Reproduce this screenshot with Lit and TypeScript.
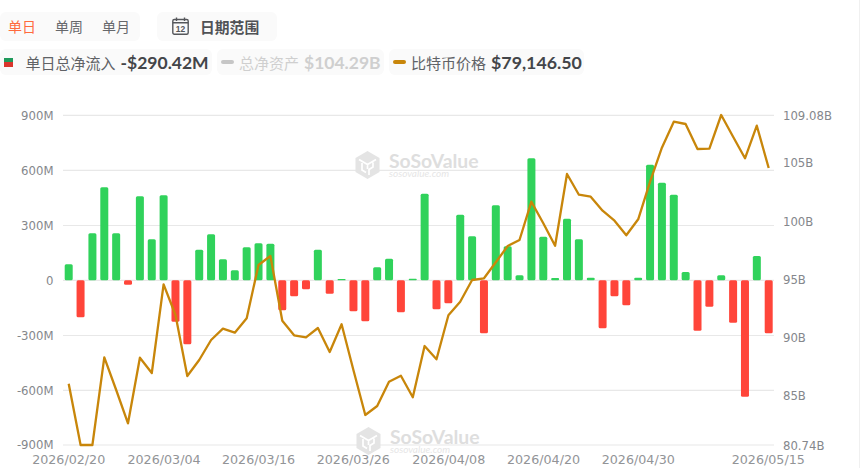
import { LitElement, html, css, svg } from "lit";
import { customElement } from "lit/decorators.js";

const X0 = 68.7;
const STEP = 700 / 59;
const ZERO = 280.3;
const bars = [16,-37,47,93,47,-4.5,84,41,85,-41.5,-64,30.6,46,21,10,33,37,36.6,-30,-16,-9,30.6,-13.4,1.3,-31,-41,13,21.6,-32,1.6,86.6,-29,-23,65.6,44,-53,75,34,5,122,43.6,2.3,61.6,41,2.6,-48,-16,-25,2.6,115.6,97.6,85.6,8.3,-50.4,-26.4,5,-42.4,-116.4,24.3,-53];
const line = [383.7,445,445,357.3,390,423.3,357.7,373,284.3,315,376,360,340,328.7,332.7,318.3,265,256,320.7,335.3,337.3,328,352,324.3,370,415,406,381.7,375.7,397.3,346,359.3,315.3,301.7,280,278.3,262.3,246,240,201.7,223.3,245.7,174,194.7,196.7,210.7,220.7,235.3,219.3,181.7,147.7,121.7,124,149,148.7,115,136.7,158.3,125.7,168];
const grid = [115.3,170.3,225.5,280.3,335.5,390.3,445];
const left = ["900M","600M","300M","0","-300M","-600M","-900M"];
const right: [string, number][] = [["109.08B",115.3],["105B",162.7],["100B",222],["95B",279.3],["90B",337.7],["85B",395.7],["80.74B",445.7]];
const dates: [string, number][] = [["2026/02/20",68.7],["2026/03/04",164],["2026/03/16",258.5],["2026/03/26",353.3],["2026/04/08",448.7],["2026/04/20",543.5],["2026/04/30",638.3],["2026/05/15",768.3]];

const mark = (x: number, y: number) => svg`
  <g transform="translate(${x} ${y})">
    <path d="M12.5 1 L24.5 8 V22 L12.5 29 L0.5 22 V8 Z" fill="#e4e4e4"></path>
    <path d="M4 9.5 L12.5 14.5 L21 9.5 M12.5 14.5 V19 M7 13 V20 L11 22.5 M18 12.5 V17 L14 19.5 V25" fill="none" stroke="#fff" stroke-width="1.7"></path>
    <text x="34" y="18" class="wm-a">SoSoValue</text>
    <text x="34" y="27" class="wm-b">sosovalue.com</text>
  </g>`;

@customElement("app-root")
export class AppRoot extends LitElement {
  static styles = css`
    :host {
      display: block;
      width: 860px;
      height: 468px;
      background: #fff;
      overflow: hidden;
      box-shadow: inset -1px 0 0 #f0f0f0;
      font-family: Lato, "Noto Sans CJK SC", sans-serif;
      color: #45474b;
    }
    .top { display: flex; flex-direction: column; gap: 8px; padding-top: 12px; height: 93px; box-sizing: border-box; }
    .row { display: flex; }
    .card { background: #fafafa; border-radius: 6px; display: flex; align-items: center; box-sizing: border-box; padding-bottom: 1px; }
    .tabs { width: 140px; height: 29px; gap: 19px; padding-left: 8px; font-size: 14px; color: #66686c; margin-right: 17px; }
    .tabs .on { color: #ff6a3d; }
    .range { width: 120px; height: 29px; padding-left: 15px; gap: 11px; font-size: 14.8px; font-weight: 700; color: #505256; }
    .range svg { display: block; }
    .legend { height: 26px; gap: 5px; }
    .item { height: 26px; font-size: 15px; gap: 5px; padding-bottom: 0; }
    .item .name { color: #606266; }
    .item .val { font-size: 17.5px; font-weight: 700; color: #434549; }
    .a { width: 212px; padding-left: 3.5px; }
    .flag { width: 9px; height: 9px; margin-right: 8px; display: flex; flex-direction: column; }
    .flag i { flex: 1; display: block; }
    .flag .g { background: #1f9a5b; }
    .flag .r { background: #d9352c; }
    .b { width: 167px; padding-left: 4px; }
    .b .name, .b .val { color: #cfcfcf; }
    .c { width: 195px; padding-left: 4px; }
    .c .val { font-size: 17.8px; }
    .swatch { width: 13px; height: 4px; border-radius: 2px; }
    .gray { background: #c6c6c6; }
    .gold { background: #c8860a; }
    svg.chart { display: block; }
    .g-line { stroke: #e8e8e8; stroke-width: 1.2; }
    .ax { font-family: "DejaVu Sans", sans-serif; font-size: 11.7px; fill: #85878c; }
    .dt { font-family: "DejaVu Sans", sans-serif; font-size: 12.7px; fill: #929497; }
    .wm-a { font-family: Lato, sans-serif; font-size: 19.4px; font-weight: 700; fill: #dedede; }
    .wm-b { font-family: Lato, sans-serif; font-size: 10px; font-style: italic; fill: #e6e6e6; }
  `;

  render() {
    return html`
      <div class="top">
        <div class="row">
          <div class="card tabs"><span class="on">单日</span><span>单周</span><span>单月</span></div>
          <div class="card range">
            <svg width="17" height="18" viewBox="0 0 17 18" fill="none" stroke="#55575b" stroke-width="1.4">
              <rect x="0.8" y="2.5" width="15.4" height="14.8" rx="1.5"></rect>
              <path d="M0.8 5.8 H16.2 M4.5 0.5 V4 M12.5 0.5 V4"></path>
              <text x="8.5" y="15" text-anchor="middle" stroke="none" fill="#55575b" style="font:700 8.5px 'Liberation Sans',sans-serif">12</text>
            </svg>
            <span>日期范围</span>
          </div>
        </div>
        <div class="row legend">
          <div class="card item a">
            <div class="flag"><i class="g"></i><i class="r"></i></div>
            <span class="name">单日总净流入</span><span class="val">-$290.42M</span>
          </div>
          <div class="card item b">
            <div class="swatch gray"></div>
            <span class="name">总净资产</span><span class="val">$104.29B</span>
          </div>
          <div class="card item c">
            <div class="swatch gold"></div>
            <span class="name">比特币价格</span><span class="val">$79,146.50</span>
          </div>
        </div>
      </div>
      ${this.chart()}
    `;
  }

  chart() {
    const O = 93;
    return html`<svg class="chart" width="860" height="375" viewBox="0 ${O} 860 375">
      ${grid.map((y) => svg`<line class="g-line" x1="63" x2="774" y1=${y} y2=${y}></line>`)}
      ${mark(355, 150)}
      ${mark(356, 426)}
      ${bars.map((v, i) => {
        const x = X0 + STEP * i - 4;
        const h = Math.abs(v);
        const y = v > 0 ? ZERO - h : ZERO;
        return svg`<rect x=${x} y=${y} width="8" height=${h} rx=${Math.min(1.5, h / 2)} fill=${v > 0 ? "#30d25b" : "#ff453a"}></rect>`;
      })}
      <polyline fill="none" stroke="#c8860a" stroke-width="2.3" stroke-linejoin="round"
        points=${line.map((y, i) => `${(X0 + STEP * i).toFixed(1)},${y}`).join(" ")}></polyline>
      ${left.map((t, i) => svg`<text class="ax" x="53.5" y=${grid[i] + 4.3} text-anchor="end">${t}</text>`)}
      ${right.map(([t, y]) => svg`<text class="ax" x="783" y=${y + 4.3}>${t}</text>`)}
      ${dates.map(([t, x]) => svg`<text class="dt" x=${x} y="463.5" text-anchor="middle">${t}</text>`)}
    </svg>`;
  }
}
